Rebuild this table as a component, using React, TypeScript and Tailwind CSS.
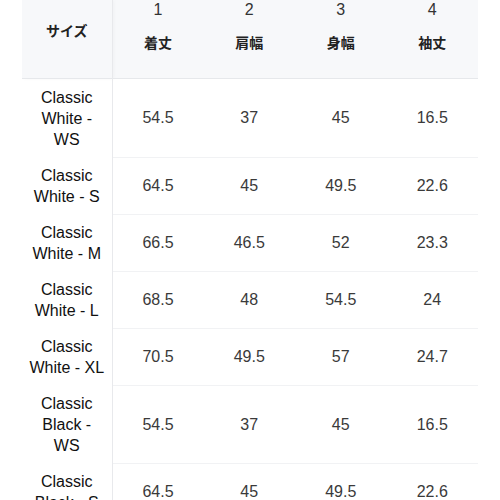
const rows: { name: string; values: string[] }[] = [
  { name: "Classic White - WS", values: ["54.5", "37", "45", "16.5"] },
  { name: "Classic White - S", values: ["64.5", "45", "49.5", "22.6"] },
  { name: "Classic White - M", values: ["66.5", "46.5", "52", "23.3"] },
  { name: "Classic White - L", values: ["68.5", "48", "54.5", "24"] },
  { name: "Classic White - XL", values: ["70.5", "49.5", "57", "24.7"] },
  { name: "Classic Black - WS", values: ["54.5", "37", "45", "16.5"] },
  { name: "Classic Black - S", values: ["64.5", "45", "49.5", "22.6"] },
  { name: "Classic Black - M", values: ["66.5", "46.5", "52", "23.3"] },
];

const columns = [
  { no: "1", label: "着丈" },
  { no: "2", label: "肩幅" },
  { no: "3", label: "身幅" },
  { no: "4", label: "袖丈" },
];

export default function App() {
  return (
    <div
      className="h-[500px] overflow-hidden bg-white"
      style={{ fontFamily: '"Liberation Sans", "Noto Sans CJK JP", sans-serif' }}
    >
      <table className="ml-[22px] w-[456px] table-fixed border-collapse text-[16px] leading-[21px]">
        <colgroup>
          <col className="w-[90px]" />
          <col />
          <col />
          <col />
          <col />
        </colgroup>
        <thead>
          <tr className="h-[78px] border-b border-[#e6e8eb] bg-[#f7f8fa]">
            <th className="border-r border-[#e8e9ec] px-[6px] pb-[16px] align-middle text-[14px] font-bold leading-[20px] text-[#222] shadow-[2px_0_4px_rgba(0,0,0,0.03)]">
              サイズ
            </th>
            {columns.map((c) => (
              <th key={c.no} className="px-2 pb-[25px] align-top font-normal leading-[20px] text-[#333]">
                <div className="text-[16px]">{c.no}</div>
                <div className="mt-[13px] text-[14px] font-bold text-[#222]">{c.label}</div>
              </th>
            ))}
          </tr>
        </thead>
        <tbody>
          {rows.map((r, i) => (
            <tr key={i}>
              <td className="relative border-r border-[#e8e9ec] px-[6px] py-[7.5px] text-center text-[#111] shadow-[2px_0_4px_rgba(0,0,0,0.03)]">
                {r.name}
              </td>
              {r.values.map((v, j) => (
                <td
                  key={j}
                  className="border-b border-[#f1f2f4] px-2 py-[7.5px] text-center text-[#3a3a3a]"
                >
                  {v}
                </td>
              ))}
            </tr>
          ))}
        </tbody>
      </table>
    </div>
  );
}
